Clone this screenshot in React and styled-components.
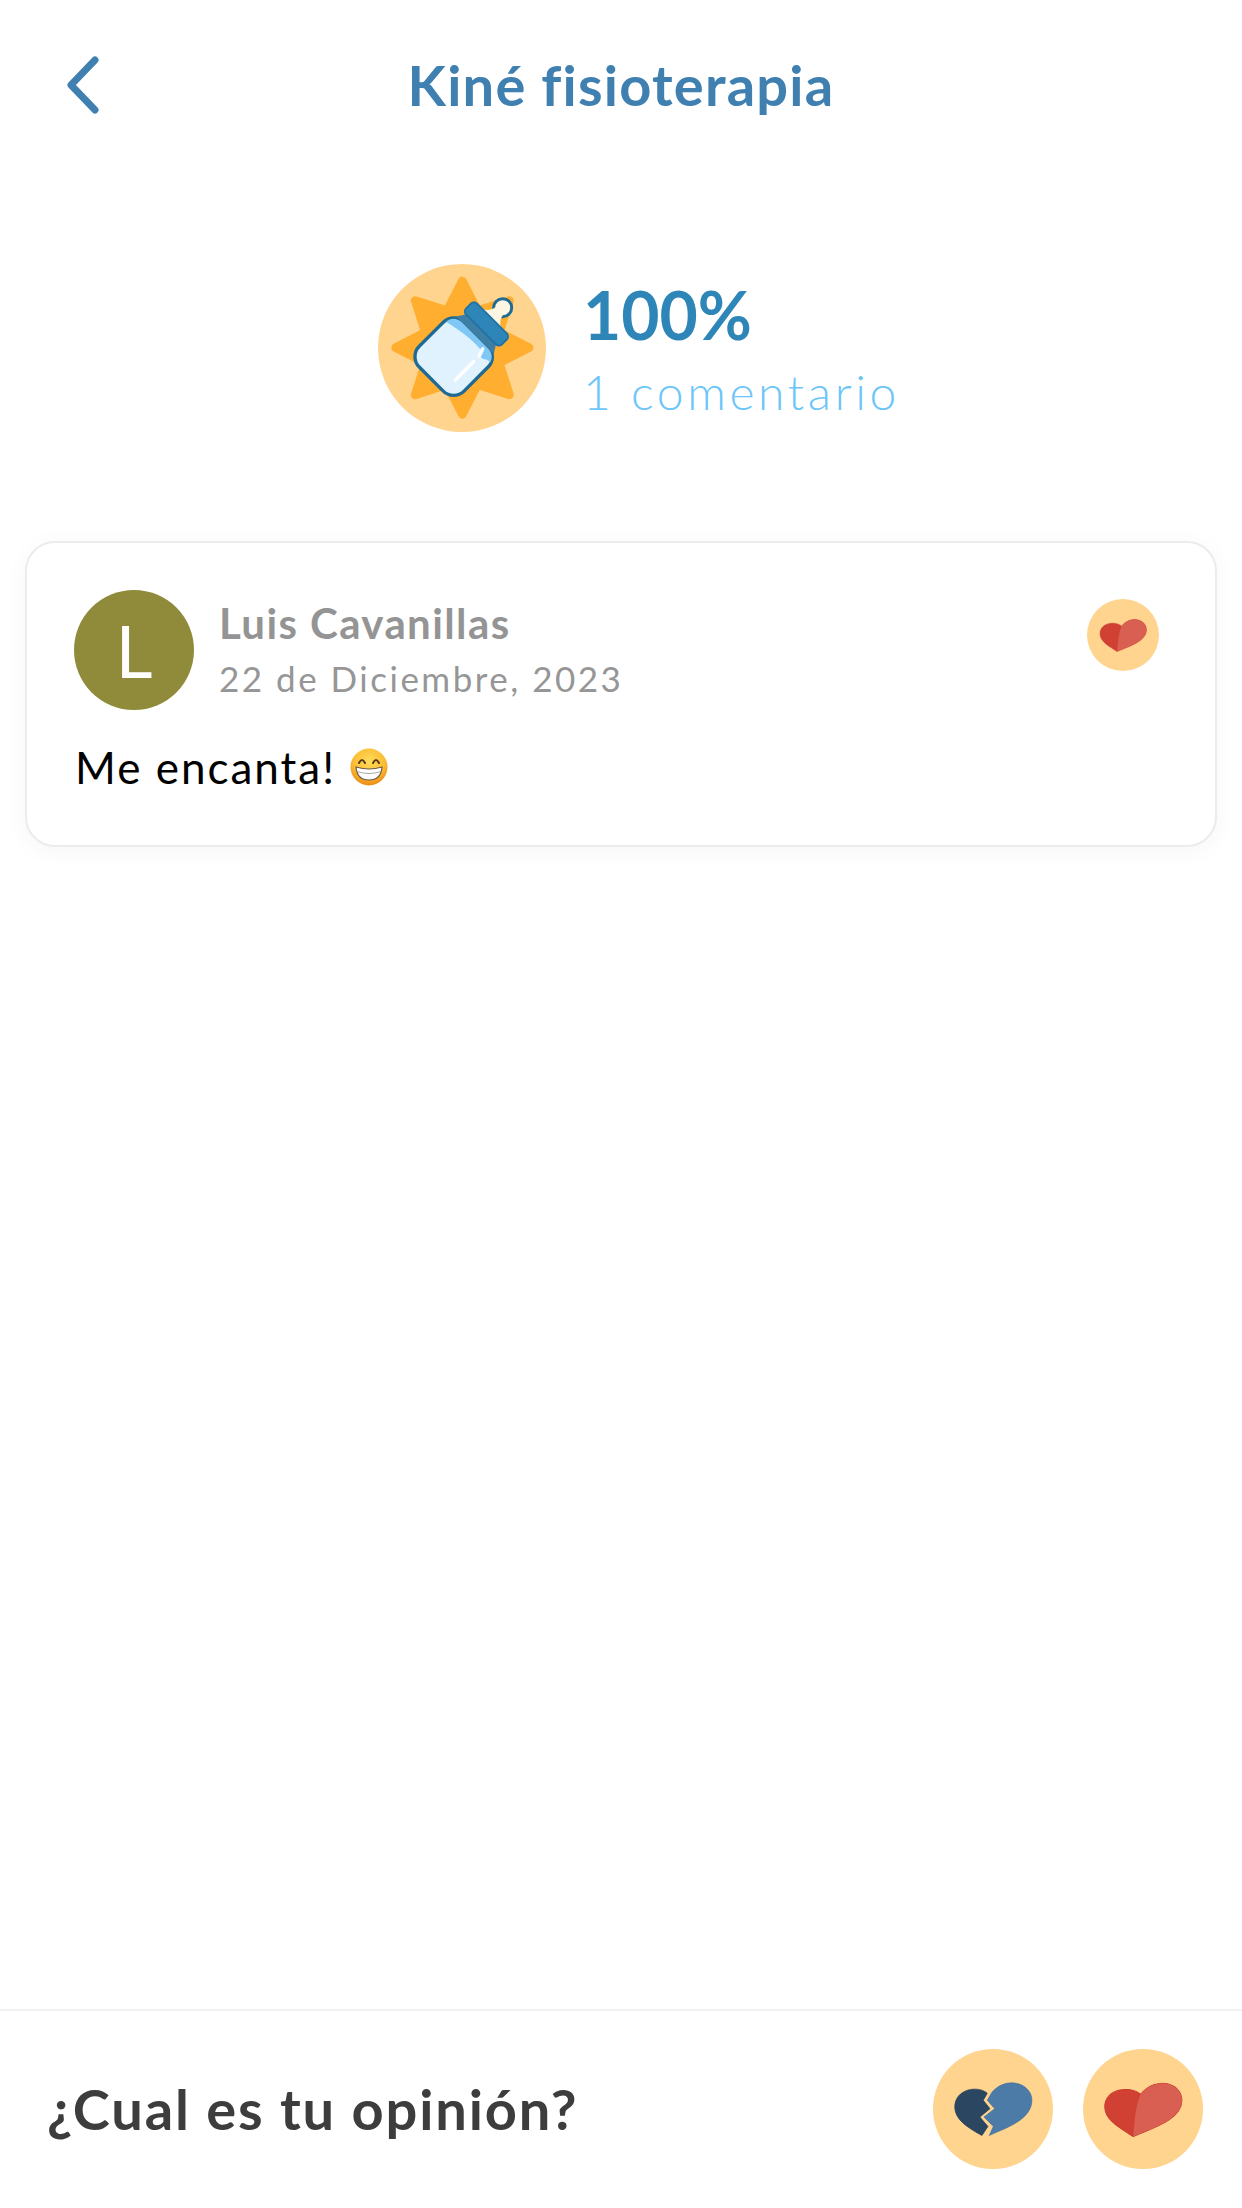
import React from "react";
import styled, { createGlobalStyle } from "styled-components";

const GlobalStyle = createGlobalStyle`
  html, body {
    margin: 0;
    padding: 0;
    background: #fff;
    font-family: "Lato", "Liberation Sans", sans-serif;
    font-variant-ligatures: none;
  }
`;

const Page = styled.div`
  width: 1242px;
  height: 2208px;
  display: flex;
  flex-direction: column;
  background: #fff;
`;

const Header = styled.header`
  height: 168px;
  display: grid;
  grid-template-columns: 156px 1fr 156px;
  align-items: center;
`;

const BackButton = styled.button`
  border: 0;
  background: none;
  padding: 2px 0 0 63px;
  display: flex;
  justify-content: flex-start;
`;

const Title = styled.h1`
  margin: 0;
  text-align: center;
  font-size: 56px;
  font-weight: 700;
  letter-spacing: 1.2px;
  color: #3f80b1;
`;

const Summary = styled.section`
  height: 168px;
  margin-top: 96px;
  padding-left: 378px;
  display: flex;
  align-items: center;
  gap: 37px;
`;

const SummaryText = styled.div`
  display: flex;
  flex-direction: column;
  gap: 11px;
`;

const Percent = styled.div`
  font-size: 66px;
  line-height: 76px;
  font-weight: 700;
  color: #2e86b8;
`;

const CommentCount = styled.div`
  font-size: 48px;
  line-height: 56px;
  font-weight: 300;
  letter-spacing: 3.6px;
  color: #6cc6f8;
`;

const Card = styled.article`
  margin: 109px 25px 0;
  height: 306px;
  box-sizing: border-box;
  padding: 47px 56px 0 47px;
  border: 2px solid #ececec;
  border-radius: 30px;
  background: #fff;
  box-shadow: 0 4px 24px rgba(0, 0, 0, 0.04);
`;

const CardTop = styled.div`
  display: flex;
  align-items: flex-start;
`;

const Avatar = styled.div`
  width: 120px;
  height: 120px;
  flex: none;
  border-radius: 50%;
  background: #8f8b3a;
  color: #fff;
  display: flex;
  align-items: center;
  justify-content: center;
  font-size: 72px;
  font-weight: 400;
`;

const Author = styled.div`
  flex: 1;
  margin-left: 25px;
  padding-top: 10px;
`;

const AuthorName = styled.div`
  font-size: 42px;
  line-height: 46px;
  font-weight: 700;
  letter-spacing: 1.4px;
  color: #949494;
`;

const AuthorDate = styled.div`
  font-size: 35px;
  line-height: 42px;
  margin-top: 11px;
  letter-spacing: 2.5px;
  color: #969696;
`;

const ReactionSlot = styled.div`
  margin-top: 9px;
`;

const CommentBody = styled.p`
  margin: 32px 0 0 1px;
  display: flex;
  align-items: center;
  gap: 14px;
  font-size: 44px;
  line-height: 50px;
  letter-spacing: 2px;
  color: #000;
`;

const Spacer = styled.div`
  flex: 1;
`;

const Footer = styled.footer`
  height: 199px;
  box-sizing: border-box;
  border-top: 2px solid #f1f1f1;
  padding: 38px 39px 0 47px;
  display: flex;
  align-items: flex-start;
  justify-content: space-between;
`;

const Question = styled.div`
  font-size: 56px;
  line-height: 120px;
  font-weight: 700;
  letter-spacing: 1.85px;
  color: #3d3d3d;
`;

const Votes = styled.div`
  display: flex;
  gap: 30px;
`;

const IconBadge = styled.svg`
  display: block;
  flex: none;
`;

const starPoints = Array.from({ length: 16 }, (_, i) => {
  const r = i % 2 === 0 ? 200 : 120;
  const a = (i * Math.PI) / 8;
  return `${367 + r * Math.sin(a)},${323 - r * Math.cos(a)}`;
}).join(" ");

function BackIcon() {
  return (
    <svg width="40" height="64" viewBox="0 0 40 64">
      <path
        d="M32 7 L8 32 L32 57"
        fill="none"
        stroke="#3f80b1"
        strokeWidth="7"
        strokeLinecap="round"
        strokeLinejoin="round"
      />
    </svg>
  );
}

function BottleBadge() {
  return (
    <IconBadge width="168" height="168" viewBox="114 72 504 504">
      <circle cx="366" cy="324" r="252" fill="#ffd48f" />
      <polygon points={starPoints} fill="#ffae2f" stroke="#ffae2f" strokeWidth="26" strokeLinejoin="round" />
      <g transform="translate(341 350) rotate(45)">
        <circle cx="0" cy="-208" r="27" fill="#fdf6e3" stroke="#1f6b94" strokeWidth="9" />
        <path d="M-50 -155 C-26 -168 -16 -178 -16 -200 L16 -200 C16 -178 26 -168 50 -155 Z" fill="#fdf6e3" />
        <rect x="-95" y="-95" width="190" height="190" rx="44" fill="#e0f2fe" stroke="#1f6b94" strokeWidth="10" />
        <path d="M-56 -90 L56 -90 C74 -90 86 -80 90 -64 C78 -70 72 -56 60 -56 C52 -56 52 -72 40 -72 C10 -76 -40 -70 -90 -58 C-90 -76 -76 -90 -56 -90 Z" fill="#7fc8f5" />
        <path d="M-62 -118 L62 -118 L80 -90 L-80 -90 Z" fill="#3d7ea6" />
        <rect x="-76" y="-162" width="152" height="46" rx="13" fill="#2e86b8" stroke="#2273a3" strokeWidth="6" />
        <path d="M53 46 L53 -32 M53 -56 L45 -78" fill="none" stroke="#fff" strokeWidth="11" strokeLinecap="round" opacity="0.9" />
      </g>
    </IconBadge>
  );
}

function LoveBadge({ size }) {
  return (
    <IconBadge width={size} height={size} viewBox="100 87 358 358">
      <circle cx="279" cy="266" r="179" fill="#ffd48f" />
      <path d="M272 222 C240 195 165 205 165 260 C165 300 215 325 250 348 C300 325 395 300 395 240 C395 190 320 165 272 222 Z" fill="#d04134" stroke="#c9392d" strokeWidth="3" />
      <path d="M272 222 C320 165 395 190 395 240 C395 300 300 325 250 348 C255 300 255 260 272 222 Z" fill="#d95f52" />
    </IconBadge>
  );
}

function BrokenBadge({ size }) {
  return (
    <IconBadge width={size} height={size} viewBox="100 87 358 358">
      <circle cx="279" cy="266" r="179" fill="#ffd48f" />
      <path d="M262 219 C235 195 165 205 165 260 C165 300 210 325 246 345 L264 318 L240 290 L270 265 L250 240 Z" fill="#2a4660" stroke="#1f3a5a" strokeWidth="2" />
      <path d="M268 345 C310 325 395 300 395 240 C395 190 320 165 276 216 L262 240 L284 265 L252 290 L280 318 Z" fill="#4c7ba8" stroke="#3f6f9e" strokeWidth="2" />
    </IconBadge>
  );
}

function GrinEmoji() {
  return (
    <svg width="38" height="38" viewBox="0 0 38 38">
      <defs>
        <radialGradient id="grinFace" cx="50%" cy="35%" r="65%">
          <stop offset="0%" stopColor="#ffdc5a" />
          <stop offset="65%" stopColor="#fbbd35" />
          <stop offset="100%" stopColor="#ec8a12" />
        </radialGradient>
      </defs>
      <circle cx="19" cy="19" r="18.5" fill="url(#grinFace)" />
      <path d="M9 15 Q12 9 15 15 M23 15 Q26 9 29 15" fill="none" stroke="#5b3a17" strokeWidth="2" strokeLinecap="round" />
      <path d="M6 19 Q19 23 32 19 Q31 32 19 32 Q7 32 6 19 Z" fill="#fff" stroke="#6e5a45" strokeWidth="1.2" />
      <path d="M7 23.5 Q19 27.5 31 23.5" fill="none" stroke="#aaa" strokeWidth="1" />
    </svg>
  );
}

export default function App() {
  return (
    <Page>
      <GlobalStyle />
      <Header>
        <BackButton aria-label="Volver">
          <BackIcon />
        </BackButton>
        <Title>Kiné fisioterapia</Title>
      </Header>

      <Summary>
        <BottleBadge />
        <SummaryText>
          <Percent>100%</Percent>
          <CommentCount>1 comentario</CommentCount>
        </SummaryText>
      </Summary>

      <Card>
        <CardTop>
          <Avatar>L</Avatar>
          <Author>
            <AuthorName>Luis Cavanillas</AuthorName>
            <AuthorDate>22 de Diciembre, 2023</AuthorDate>
          </Author>
          <ReactionSlot>
            <LoveBadge size={72} />
          </ReactionSlot>
        </CardTop>
        <CommentBody>
          Me encanta! <GrinEmoji />
        </CommentBody>
      </Card>

      <Spacer />

      <Footer>
        <Question>¿Cual es tu opinión?</Question>
        <Votes>
          <BrokenBadge size={120} />
          <LoveBadge size={120} />
        </Votes>
      </Footer>
    </Page>
  );
}
